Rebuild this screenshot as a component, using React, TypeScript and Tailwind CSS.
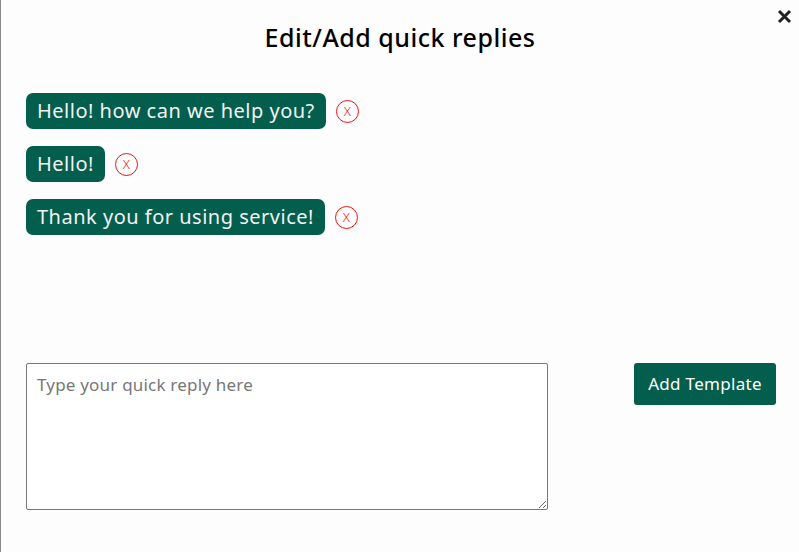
const replies = ['Hello! how can we help you?', 'Hello!', 'Thank you for using service!'];

export default function App() {
  return (
    <div
      className="relative w-[799px] h-[552px] bg-[#fdfdfd] border-l border-[#8a8a8a] text-black"
      style={{ fontFamily: '"Noto Sans", sans-serif' }}
    >
      <button className="absolute right-[7px] top-[9px] text-[#222]">
        <svg width="15" height="15" viewBox="0 0 15 15">
          <path d="M2 2L13 13M13 2L2 13" stroke="currentColor" strokeWidth="3" />
        </svg>
      </button>
      <h1 className="pt-[20px] text-center text-[25px] tracking-[0.5px] font-medium leading-[34px]">
        Edit/Add quick replies
      </h1>
      <div className="mt-[39px] pl-[25px] flex flex-col gap-[17px] items-start">
        {replies.map((r) => (
          <div key={r} className="flex items-center gap-[10px]">
            <span className="bg-[#035e4d] text-[#f2f2f2] text-[20px] tracking-[0.5px] leading-[36px] h-[36px] px-[11px] rounded-[7px]">
              {r}
            </span>
            <span className="w-[23px] h-[23px] rounded-full border border-[#f01010] text-[#f01010] text-[13px] font-light leading-none flex items-center justify-center">
              X
            </span>
          </div>
        ))}
      </div>
      <div className="mt-[128px] pl-[25px] flex items-start">
        <textarea
          placeholder="Type your quick reply here"
          className="w-[522px] h-[147px] border border-[#777] rounded-[2px] bg-white px-[10px] pt-[8px] pb-[10px] text-[17px] tracking-[0.2px] placeholder:text-[#777] resize"
        />
        <button className="ml-[86px] h-[42px] w-[142px] bg-[#035e4d] text-white text-[17px] tracking-[0.3px] rounded-[3px]">
          Add Template
        </button>
      </div>
    </div>
  );
}
